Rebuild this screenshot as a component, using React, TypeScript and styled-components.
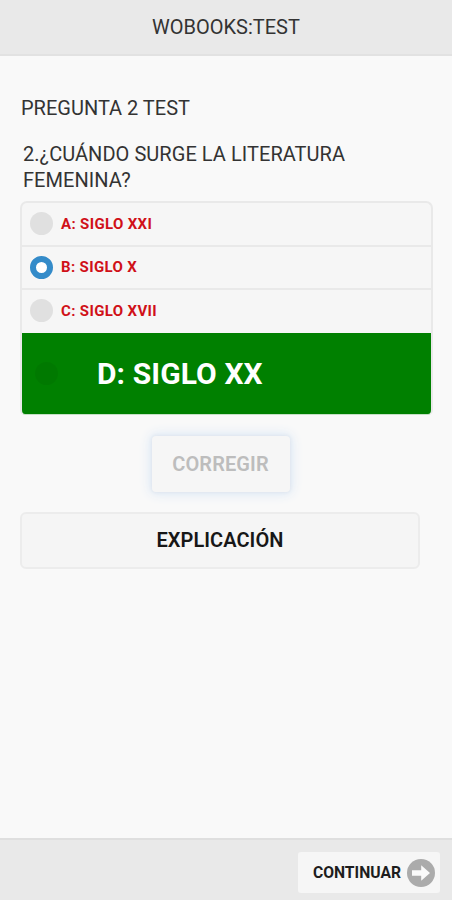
import React, { useState } from 'react';
import styled, { createGlobalStyle } from 'styled-components';

const GlobalStyle = createGlobalStyle`
  * { box-sizing: border-box; }
  body { margin: 0; background: #f9f9f9; }
  button { font: inherit; margin: 0; padding: 0; }
`;

const Page = styled.div`
  display: flex;
  flex-direction: column;
  height: 900px;
  background: #f9f9f9;
  color: #333;
  font-family: Roboto, sans-serif;
  text-transform: uppercase;
`;

const Header = styled.header`
  height: 56px;
  background: #e9e9e9;
  border-bottom: 2px solid #e2e2e2;
`;

const Title = styled.h1`
  margin: 0;
  font-size: 20px;
  font-weight: 400;
  line-height: 54px;
  text-align: center;
`;

const Content = styled.main`
  flex: 1;
  display: flex;
  flex-direction: column;
  padding: 39px 20px 0 21px;
`;

const Heading = styled.h2`
  margin: 0;
  font-size: 20px;
  font-weight: 400;
  line-height: 26px;
`;

const Question = styled.p`
  margin: 20px 0 8px 2px;
  width: 360px;
  font-size: 20px;
  line-height: 26px;
  letter-spacing: 0.05px;
`;

const Options = styled.div`
  height: 214px;
  border: 2px solid #e9e9e9;
  border-bottom: 1px solid #c5e0c5;
  border-radius: 7px 7px 5px 5px;
  background: #f6f6f6;
  margin-right: -1px;
  margin-left: -1px;
  overflow: hidden;
`;

const Option = styled.label<{ $correct?: boolean }>`
  display: flex;
  align-items: center;
  gap: ${p => (p.$correct ? '39px' : '8px')};
  height: ${p => (p.$correct ? '81px' : '43.5px')};
  padding-left: ${p => (p.$correct ? '13px' : '8px')};
  border-bottom: ${p => (p.$correct ? '0' : '2px solid #e9e9e9')};
  background: ${p => (p.$correct ? '#008000' : 'transparent')};
  color: ${p => (p.$correct ? '#fff' : '#d01018')};
  font-size: ${p => (p.$correct ? '30px' : '15px')};
  font-weight: 700;

  &:nth-child(3) {
    height: 43px;
    padding-bottom: 2px;
    border-bottom: 0;
  }
`;

const Radio = styled.input<{ $correct?: boolean }>`
  appearance: none;
  flex: none;
  width: 23px;
  height: 23px;
  margin: 0;
  border-radius: 50%;
  background: ${p => (p.$correct ? '#007900' : '#e0e0e0')};
  &:checked {
    border: 6px solid #348bc9;
    background: #fff;
  }
`;

const OptionText = styled.span<{ $spacing: string }>`
  letter-spacing: ${p => p.$spacing};
  white-space: nowrap;
`;

const CheckButton = styled.button`
  align-self: center;
  width: 138px;
  height: 56px;
  margin: 21px 12px 0 0;
  border: 0;
  border-radius: 4px;
  background: #f6f6f6;
  box-shadow: 0 0 3px 1px #e0e7f0, 0 0 12px 2px #dce8f6;
  color: #bdbdbd;
  font-size: 20px;
  font-weight: 600;
  letter-spacing: 0.1px;
  text-transform: inherit;
`;

const ExplainButton = styled.button`
  width: 400px;
  height: 57px;
  margin: 20px 0 0 -1px;
  padding-bottom: 2px;
  border: 2px solid #ececec;
  border-radius: 6px;
  background: #f5f5f5;
  color: #171717;
  font-size: 20px;
  font-weight: 600;
  letter-spacing: 0.05px;
  text-transform: inherit;
`;

const Footer = styled.footer`
  display: flex;
  justify-content: flex-end;
  height: 62px;
  padding: 12px 12px 0 0;
  border-top: 2px solid #dfdfdf;
  background: #e9e9e9;
`;

const NextButton = styled.button`
  display: flex;
  align-items: center;
  justify-content: flex-end;
  gap: 6px;
  width: 142px;
  height: 41px;
  padding-right: 5px;
  border: 0;
  border-radius: 3px;
  background: #f6f6f6;
  color: #1d1d1d;
  font-size: 15.7px;
  font-weight: 700;
  text-transform: inherit;
`;

const ArrowIcon = () => (
  <svg width="28" height="28" viewBox="0 0 28 28" aria-hidden="true">
    <circle cx="14" cy="14" r="14" fill="#ababab" />
    <path d="M5 11.3h9.2V6.2L23 14l-8.8 7.8v-5.1H5z" fill="#fafafa" />
  </svg>
);

const options = [
  { id: 'A', text: 'Siglo XXI', spacing: '0.35px' },
  { id: 'B', text: 'Siglo X', spacing: '0.35px' },
  { id: 'C', text: 'Siglo XVII', spacing: '0.35px' },
  { id: 'D', text: 'Siglo XX', spacing: '0.1px', correct: true },
];

export default function App() {
  const [selected, setSelected] = useState('B');
  return (
    <Page>
      <GlobalStyle />
      <Header>
        <Title>Wobooks:Test</Title>
      </Header>
      <Content>
        <Heading>Pregunta 2 test</Heading>
        <Question>2.¿Cuándo surge la literatura femenina?</Question>
        <Options>
          {options.map(o => (
            <Option key={o.id} $correct={o.correct}>
              <Radio
                type="radio"
                name="answer"
                $correct={o.correct}
                checked={selected === o.id}
                onChange={() => setSelected(o.id)}
              />
              <OptionText $spacing={o.spacing}>{`${o.id}: ${o.text}`}</OptionText>
            </Option>
          ))}
        </Options>
        <CheckButton disabled>Corregir</CheckButton>
        <ExplainButton>Explicación</ExplainButton>
      </Content>
      <Footer>
        <NextButton>
          Continuar
          <ArrowIcon />
        </NextButton>
      </Footer>
    </Page>
  );
}
